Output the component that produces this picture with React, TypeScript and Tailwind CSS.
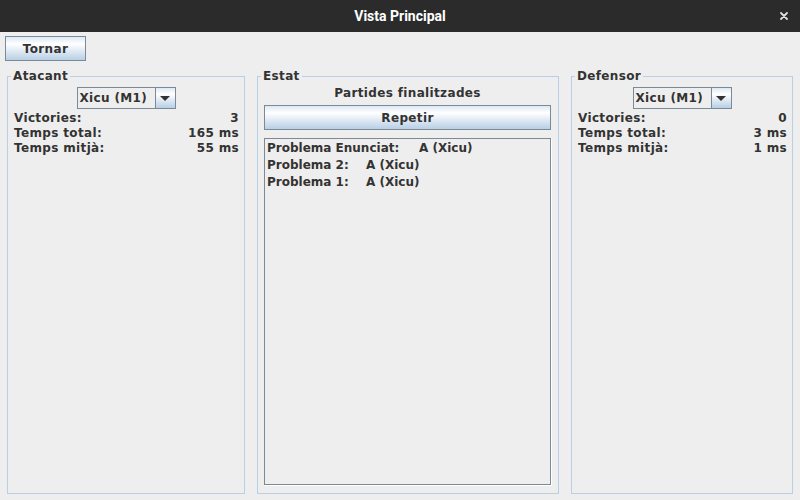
const ui = { fontFamily: '"DejaVu Sans", "Liberation Sans", sans-serif' };

function MetalButton({ label, className }: { label: string; className: string }) {
  return (
    <button
      className={
        "flex items-center justify-center border border-[#7a8a99] bg-[linear-gradient(#dde8f3,#ffffff_30%,#b8cfe5)] text-[12px] font-bold tracking-[0.35px] text-[#333333] " +
        className
      }
    >
      {label}
    </button>
  );
}

function Combo() {
  return (
    <div className="-ml-[1px] flex h-[22px] w-[99px] border border-[#7a8a99] bg-[#eeeeee]">
      <div className="flex flex-1 items-center pl-[2px] text-[12px] font-bold tracking-[0.35px] text-[#333333]">Xicu (M1)</div>
      <div className="flex w-[20px] items-center justify-center border-l border-[#7a8a99] bg-[linear-gradient(#dde8f3,#ffffff_30%,#b8cfe5)]">
        <svg width="10" height="5" viewBox="0 0 10 5">
          <polygon points="0,0 10,0 5,5" fill="#333333" />
        </svg>
      </div>
    </div>
  );
}

function Row({ label, value }: { label: string; value: string }) {
  return (
    <div className="flex h-[15px] items-center justify-between text-[12px] font-bold tracking-[0.35px] text-[#333333]">
      <span>{label}</span>
      <span>{value}</span>
    </div>
  );
}

function PanelTitle({ children }: { children: string }) {
  return (
    <legend className="-ml-[3px] px-[2px] text-[12px] leading-[15px] font-bold tracking-[0.35px] text-[#333333]">
      {children}
    </legend>
  );
}

function PlayerPanel({ title, stats, width }: { title: string; stats: [string, string][]; width: string }) {
  return (
    <fieldset className={"flex flex-col border border-[#b8cfe5] pl-[6px] pr-[5px] " + width}>
      <PanelTitle>{title}</PanelTitle>
      <div className="mt-[3px] flex justify-center">
        <Combo />
      </div>
      <div className="mt-[1px]">
        {stats.map(([l, v]) => (
          <Row key={l} label={l} value={v} />
        ))}
      </div>
    </fieldset>
  );
}

export default function App() {
  return (
    <div className="flex h-[500px] w-[800px] flex-col overflow-hidden bg-[#eeeeee]" style={ui}>
      {/* Title bar */}
      <div className="relative flex h-[32px] items-center justify-center bg-[#2b2b2b]">
        <span className="text-[14px] font-bold text-white" style={{ fontFamily: "Roboto, sans-serif" }}>
          Vista Principal
        </span>
        <svg className="absolute right-[12px] top-[12px]" width="8" height="8" viewBox="0 0 8 8">
          <path d="M1 1L7 7M7 1L1 7" stroke="#dddddd" strokeWidth="1.8" strokeLinecap="round" />
        </svg>
      </div>

      <div className="flex flex-1 flex-col px-[5px] pt-[4px]">
        <MetalButton label="Tornar" className="h-[25px] w-[81px]" />

        <div className="mt-[8px] flex flex-1 gap-[12px] pb-[6px] pl-[2px]">
          <PlayerPanel
            title="Atacant"
            width="w-[238px]"
            stats={[
              ["Victories:", "3"],
              ["Temps total:", "165 ms"],
              ["Temps mitjà:", "55 ms"],
            ]}
          />

          <fieldset className="flex w-[302px] flex-col border border-[#b8cfe5] pl-[6px] pr-[7px] pb-[8px]">
            <PanelTitle>Estat</PanelTitle>
            <div className="mt-[2px] text-center text-[12px] leading-[15px] font-bold tracking-[0.35px] text-[#333333]">
              Partides finalitzades
            </div>
            <MetalButton label="Repetir" className="mt-[4px] h-[25px] w-full" />
            <div className="mt-[8px] flex-1 border border-[#7a8a99] pl-[2px] pt-[1px] text-[12px] leading-[17px] font-bold text-[#333333] shadow-[1px_1px_0_#ffffff]">
              <div className="flex">
                <span className="w-[152px]">Problema Enunciat:</span>
                <span>A (Xicu)</span>
              </div>
              <div className="flex">
                <span className="w-[99px]">Problema 2:</span>
                <span>A (Xicu)</span>
              </div>
              <div className="flex">
                <span className="w-[99px]">Problema 1:</span>
                <span>A (Xicu)</span>
              </div>
            </div>
          </fieldset>

          <PlayerPanel
            title="Defensor"
            width="w-[222px]"
            stats={[
              ["Victories:", "0"],
              ["Temps total:", "3 ms"],
              ["Temps mitjà:", "1 ms"],
            ]}
          />
        </div>
      </div>
    </div>
  );
}
